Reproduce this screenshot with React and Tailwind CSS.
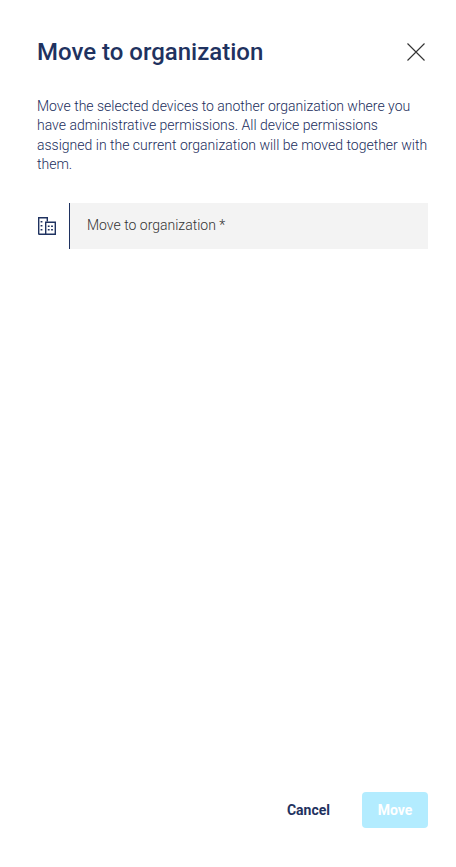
export default function App() {
  return (
    <div className="w-[456px] h-[867px] bg-white flex flex-col font-['Roboto',sans-serif] text-[#1f3260]">
      <div className="flex items-center justify-between pl-[37px] pr-[28px] pt-[32px] h-[71px]">
        <h1 className="text-[24px] leading-[32px] font-medium">Move to organization</h1>
        <svg width="24" height="24" viewBox="0 0 24 24" fill="none" stroke="#333" strokeWidth="1.1">
          <path d="M3.5 3.5L20.5 20.5M20.5 3.5L3.5 20.5" />
        </svg>
      </div>
      <p className="mx-[37px] mt-[25.5px] w-[392px] text-[14px] leading-[19.6px] font-light text-[#1a2d5c]">
        Move the selected devices to another organization where you have administrative permissions. All device permissions assigned in the current organization will be moved together with them.
      </p>
      <div className="flex items-center mt-[28.5px] ml-[37px] mr-[28px]">
        <svg className="w-[20px] h-[20px] mr-[12px]" viewBox="0 0 20 20" fill="none" stroke="#1f3260" strokeWidth="1.4">
          <path d="M1.7 18.5V1.7H10.3V5.5" />
          <path d="M8.7 18.3V6.2H18.3V18.3H1.7" />
          <path d="M4.5 5v1.6M4.5 9v1.6M4.5 13v1.6M11.7 9.5v1.6M15 9.5v1.6M11.7 13v1.6M15 13v1.6" strokeWidth="1.8" />
        </svg>
        <div className="flex-1 h-[46px] bg-[#f3f3f3] border-l border-[#1f3260] flex items-center pl-[17px] pb-[2px] text-[14px] font-light text-[#333]">
          Move to organization *
        </div>
      </div>
      <div className="mt-auto mb-[39px] mr-[28px] flex items-center justify-end">
        <button className="text-[14px] font-bold mr-[32px]">Cancel</button>
        <button className="w-[66px] h-[36px] rounded-[4px] bg-[#b3ecff] text-white text-[14px] font-bold">Move</button>
      </div>
    </div>
  );
}
